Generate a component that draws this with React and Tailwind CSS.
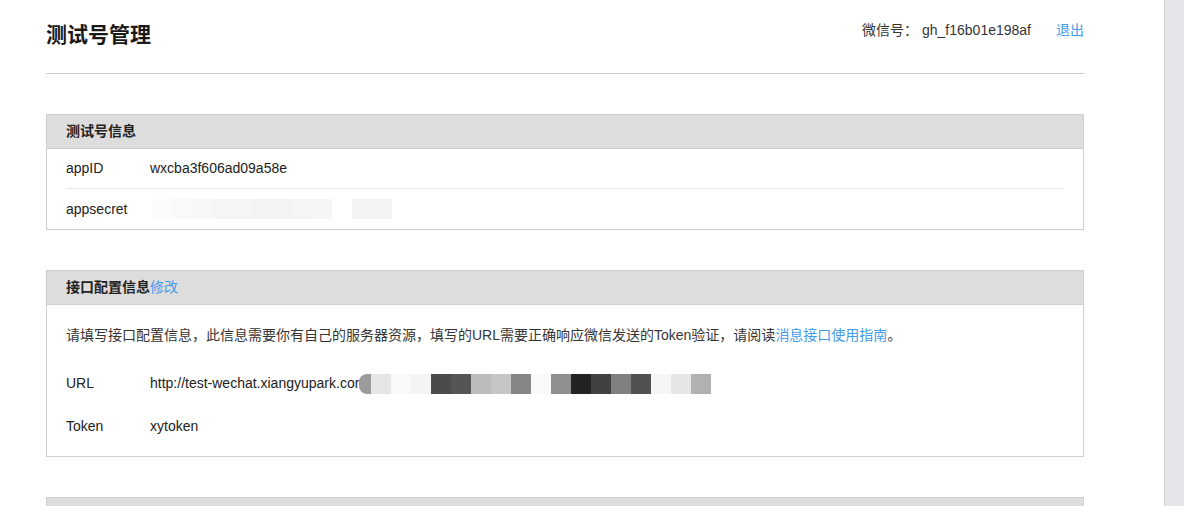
import React from "react";

const FONT = { fontFamily: '"Liberation Sans", "Noto Sans CJK SC", Arial, sans-serif' };

const urlBlocks = [
  "#e6e6e6", "#f9f9f9", "#f4f4f4", "#4b4b4b", "#555555", "#bcbcbc", "#c6c6c6", "#868686",
  "#f9f9f9", "#8f8f8f", "#232323", "#414141", "#808080", "#515151", "#f5f5f5", "#e6e6e6", "#b1b1b1",
];

const secretBlocks = [
  "#fbfbfb", "#f9f9f9", "#f8f8f8", "#f5f5f5", "#f5f5f5", "#f3f3f3", "#f3f3f3", "#f5f5f5",
  "#f6f6f6", "#ffffff", "#f3f3f3", "#f3f3f3",
];

function Panel({ title, children }) {
  return (
    <div className="border border-[#cfcfcf] bg-white">
      <div className="h-[34px] bg-[#dddddd] border-b border-[#cfcfcf] px-[19px] flex items-center text-[14px] font-bold text-[#222]">
        {title}
      </div>
      {children}
    </div>
  );
}

export default function App() {
  return (
    <div className="flex h-[506px] w-[1184px] overflow-hidden bg-white text-[#222]" style={FONT}>
      <div className="flex-1 pl-[46px]">
        <div className="w-[1038px]">
          <div className="flex justify-between items-start pt-[20px] pb-[23px] border-b border-[#cccccc]">
            <h1 className="text-[21px] leading-[30px] font-bold text-[#191919]">测试号管理</h1>
            <div className="flex items-center text-[14px] leading-[20px] text-[#353535]">
              <span>微信号：</span>
              <span className="ml-[4px]">gh_f16b01e198af</span>
              <a className="ml-[25px] text-[#459ae9]">退出</a>
            </div>
          </div>

          <div className="mt-[40px]">
            <Panel title="测试号信息">
              <div className="px-[19px] text-[14px]">
                <div className="h-[40px] flex items-center border-b border-[#e5e5e5]">
                  <span className="w-[84px]">appID</span>
                  <span>wxcba3f606ad09a58e</span>
                </div>
                <div className="h-[40px] flex items-center">
                  <span className="w-[84px]">appsecret</span>
                  <span className="flex ml-[2px]">
                    {secretBlocks.map((c, i) => (
                      <span key={i} className="block w-[20px] h-[20px]" style={{ background: c }} />
                    ))}
                  </span>
                </div>
              </div>
            </Panel>
          </div>

          <div className="mt-[40px]">
            <Panel
              title={
                <span>
                  接口配置信息<span className="font-normal text-[#459ae9]">修改</span>
                </span>
              }
            >
              <div className="px-[19px] pt-[20px] pb-[8px] text-[14px]">
                <p className="leading-[20px] text-[#353535]">
                  请填写接口配置信息，此信息需要你有自己的服务器资源，填写的URL需要正确响应微信发送的Token验证，请阅读
                  <a className="text-[#459ae9]">消息接口使用指南</a>。
                </p>
                <div className="mt-[17px] h-[43px] flex items-center">
                  <span className="w-[84px]">URL</span>
                  <span className="whitespace-nowrap">http://test-wechat.xiangyupark.cor</span>
                  <span className="flex items-center">
                    <span className="block w-[12px] h-[20px] rounded-l-[8px] bg-[#9b9b9b]" />
                    {urlBlocks.map((c, i) => (
                      <span key={i} className="block w-[20px] h-[20px]" style={{ background: c }} />
                    ))}
                  </span>
                </div>
                <div className="h-[43px] flex items-center">
                  <span className="w-[84px]">Token</span>
                  <span>xytoken</span>
                </div>
              </div>
            </Panel>
          </div>

          <div className="mt-[40px]">
            <Panel title="">
              <div className="h-[100px]" />
            </Panel>
          </div>
        </div>
      </div>
      <div className="w-[20px] h-full bg-[#e6e6ea] border-l border-[#cfcfcf]" />
    </div>
  );
}
